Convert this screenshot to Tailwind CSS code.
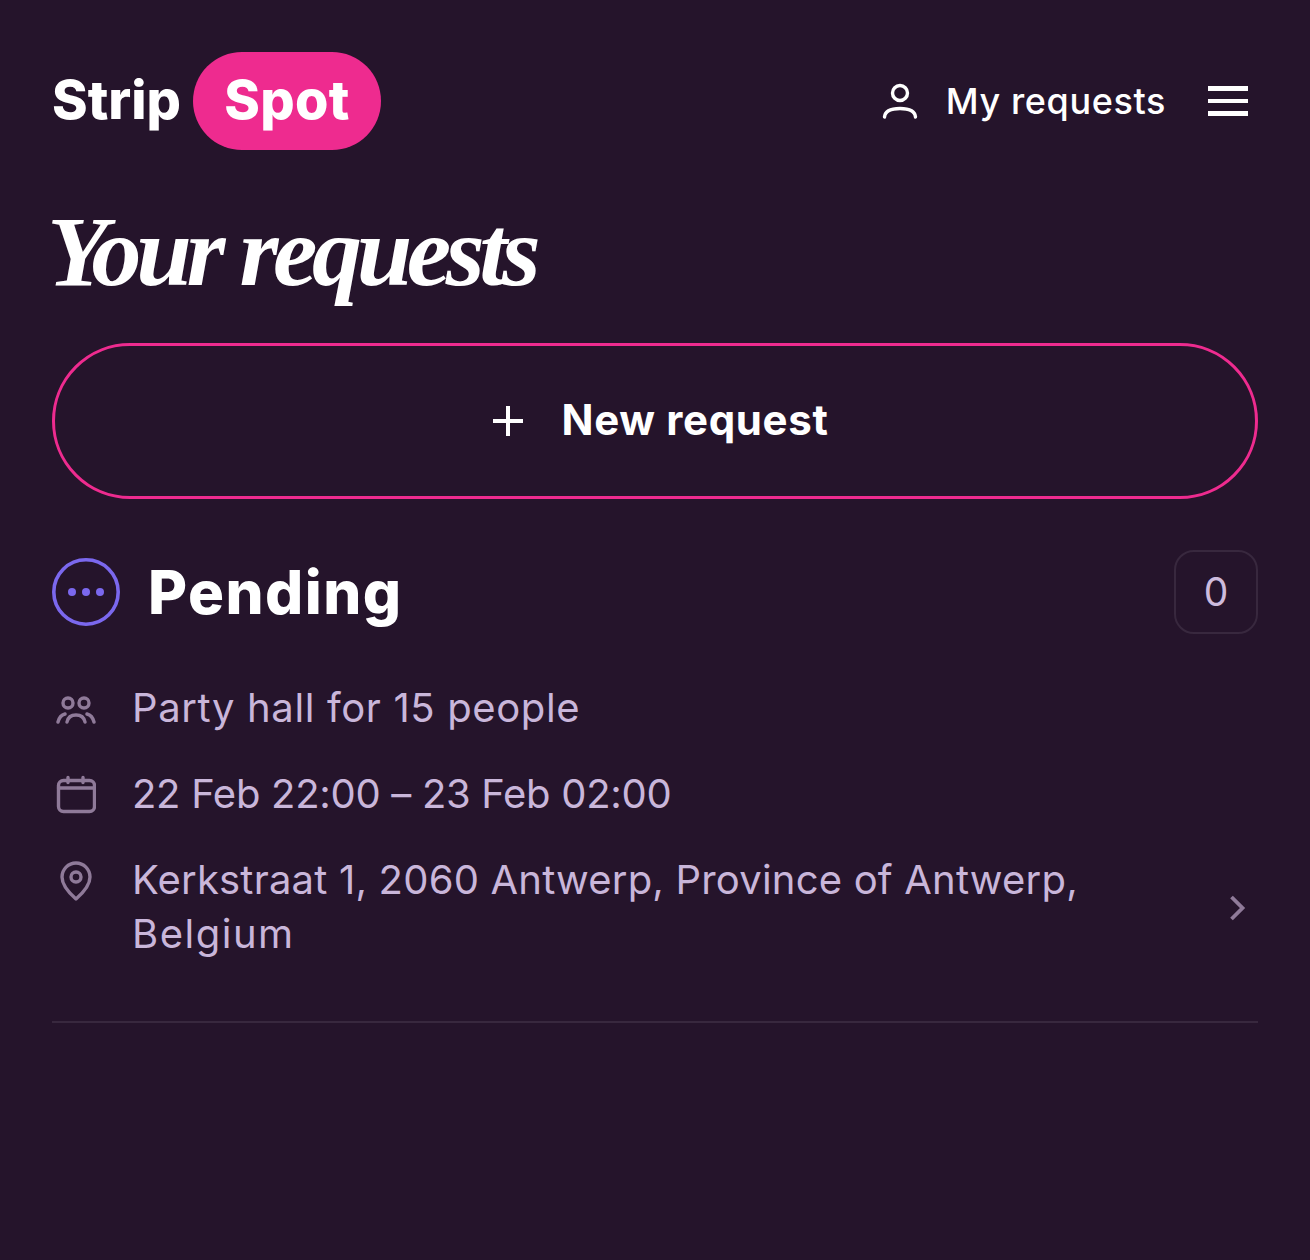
<!DOCTYPE html>
<html lang="en">
<head>
  <meta charset="UTF-8" />
  <title>StripSpot - Your requests</title>
  <script src="https://cdn.jsdelivr.net/npm/@tailwindcss/browser@4"></script>
</head>
<body class="bg-[#25142b] font-['Inter',sans-serif] text-white min-h-[1260px]">
  <div class="px-[52px] pt-[52px]">
    <!-- Header -->
    <header class="flex items-center justify-between h-[98px]">
      <div class="flex items-center gap-[12px]">
        <span class="w-[129px] pb-[3px] text-[54px] font-extrabold tracking-[0px]">Strip</span>
        <span class="flex items-center justify-center w-[188px] h-[98px] pb-[3px] rounded-[49px] bg-[#ee2b8f] text-[54px] font-extrabold tracking-[0.3px]">Spot</span>
      </div>
      <div class="flex items-center">
        <svg class="w-[40px] h-[40px] mr-[26px]" viewBox="0 0 40 40" fill="none" stroke="white" stroke-width="3.4" stroke-linecap="round">
          <circle cx="20" cy="12" r="7.5"/>
          <path d="M4.5 36C5 30 11 27.5 20 27.5S35 30 35.5 36"/>
        </svg>
        <span class="text-[36px] font-medium tracking-[0.6px]">My requests</span>
        <div class="flex flex-col gap-[8px] ml-[42px] mr-[10px] w-[40px]">
          <div class="h-[4.5px] bg-white"></div>
          <div class="h-[4.5px] bg-white"></div>
          <div class="h-[4.5px] bg-white"></div>
        </div>
      </div>
    </header>

    <h1 class="mt-[49px] -ml-[5px] h-[103px] font-['Liberation_Serif',serif] italic font-bold text-[100px] leading-[106px] tracking-[-5.4px]">Your requests</h1>

    <!-- New request -->
    <button class="mt-[41px] w-full h-[156px] flex items-center justify-center rounded-[78px] border-[3px] border-[#ee2b8f]">
      <svg class="w-[32px] h-[32px] ml-[10px] mr-[38px]" viewBox="0 0 32 32" stroke="white" stroke-width="4"><path d="M16 1v30M1 16h30"/></svg>
      <span class="mb-[3px] text-[42px] font-bold tracking-[0.65px]">New request</span>
    </button>

    <!-- Pending -->
    <section class="mt-[51px] pb-[60px] border-b-2 border-[#38283e]">
      <div class="flex items-center justify-between h-[84px]">
        <div class="flex items-center gap-[28px]">
          <svg class="w-[68px] h-[68px]" viewBox="0 0 68 68" fill="#7b68ee">
            <circle cx="34" cy="34" r="32.2" fill="none" stroke="#7b68ee" stroke-width="3.6"/>
            <circle cx="20" cy="34" r="4"/><circle cx="34" cy="34" r="4"/><circle cx="48" cy="34" r="4"/>
          </svg>
          <h2 class="text-[60px] font-extrabold tracking-[1.45px]">Pending</h2>
        </div>
        <div class="w-[84px] h-[84px] flex items-center justify-center rounded-[20px] border-2 border-[#38283e] text-[39px] text-[#cdbbdd]">0</div>
      </div>

      <div class="relative mt-[47px] pr-[130px] flex flex-col gap-[32px] text-[40px] leading-[54px] text-[#c9b6da]">
        <div class="flex items-center h-[54px]">
          <svg class="w-[40px] h-[40px] ml-[4px] mr-[36px]" viewBox="0 0 40 40" fill="none" stroke="#8f7a99" stroke-width="3.4" stroke-linecap="round">
            <circle cx="12" cy="15" r="5"/><circle cx="28" cy="15" r="5"/>
            <path d="M2 34C3 30 5 27 9 26M38 34C37 30 35 27 31 26M11 34C12 29 16 27 20 27S28 29 29 34"/>
          </svg>
          <span class="tracking-[0.63px]">Party hall for 15 people</span>
        </div>
        <div class="flex items-center h-[54px]">
          <svg class="w-[40px] h-[40px] ml-[4px] mr-[36px]" viewBox="0 0 40 40" fill="none" stroke="#8f7a99" stroke-width="3.4" stroke-linecap="round">
            <rect x="2.5" y="6.5" width="36" height="31" rx="5"/>
            <path d="M2.5 14h36M12 3.5v5M27 3.5v5"/>
          </svg>
          <span class="tracking-[-0.3px]">22 Feb 22:00 – 23 Feb 02:00</span>
        </div>
        <div class="flex items-start">
          <svg class="w-[40px] h-[44px] ml-[4px] mr-[36px] mt-[8px] shrink-0" viewBox="0 0 40 44" fill="none" stroke="#8f7a99" stroke-width="3.4" stroke-linejoin="round">
            <path d="M20 38C12 31 6 24 6 16a14 14 0 0 1 28 0c0 8-6 15-14 22z"/>
            <circle cx="20" cy="16" r="5"/>
          </svg>
          <span class="tracking-[0.2px]">Kerkstraat 1, 2060 Antwerp, Province of Antwerp, <span class="tracking-[1.5px]">Belgium</span></span>
        </div>
        <svg class="absolute right-[10px] top-[212px] w-[20px] h-[30px]" viewBox="0 0 20 30" fill="none" stroke="#8f7a99" stroke-width="3.8"><path d="M3.5 4l11 11-11 11"/></svg>
      </div>
    </section>
  </div>
</body>
</html>
